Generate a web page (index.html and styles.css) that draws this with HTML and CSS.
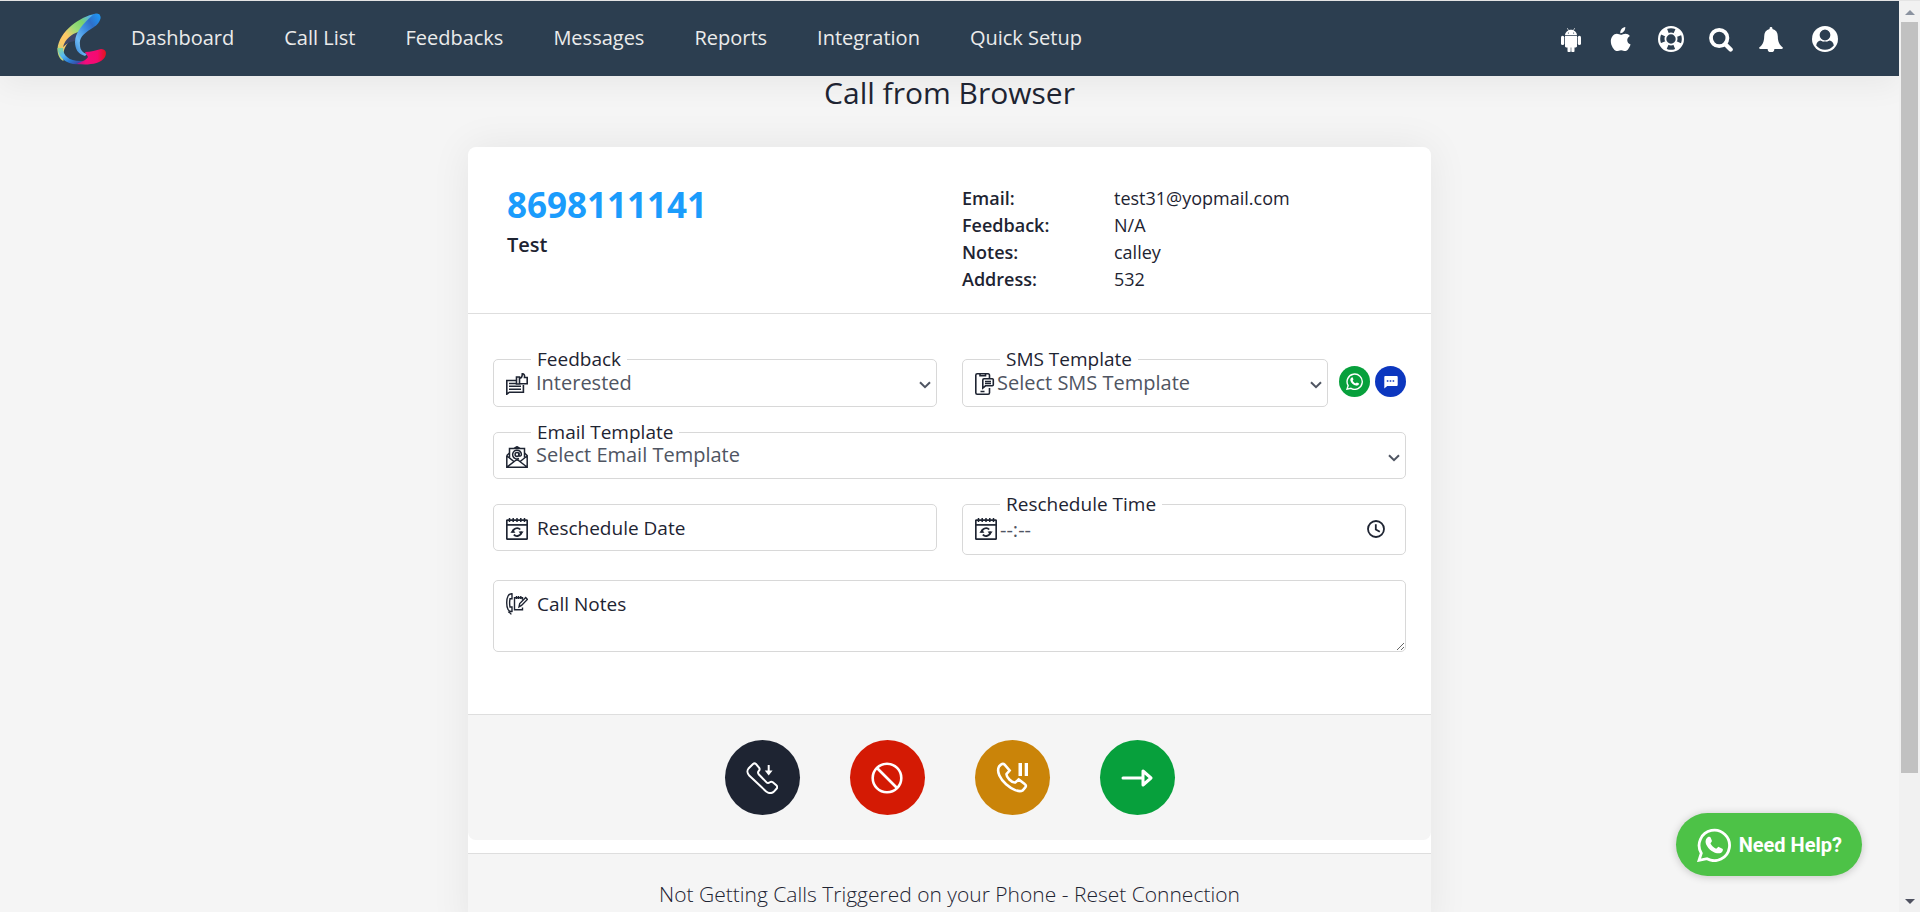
FILE: index.html
```html
<!DOCTYPE html>
<html lang="en">
<head>
<meta charset="utf-8">
<meta name="viewport" content="width=device-width, initial-scale=1">
<title>Call from Browser</title>
<link rel="stylesheet" href="styles.css">
</head>
<body>
<svg class="sprite" aria-hidden="true">
  <symbol id="calendar" viewBox="0 0 22 22">
    <g fill="none" stroke="currentColor" stroke-width="1.7">
      <rect x=".8" y="2.2" width="20.4" height="19" rx=".6"/>
      <path d="M1 6.9h20"/>
      <path d="M3.5 0v4M7.2 0v4M11 0v4M14.8 0v4M18.500 0v4" stroke-width="1.500"/>
      <path d="M6.800 14.500a4.300 4.300 0 0 1 7.400-3M15.200 13.500a4.300 4.300 0 0 1-7.400 3.200" stroke-width="1.800"/>
    </g>
    <path d="M4.400 14.800h5l-2.500-3.600zM12.600 13.400h5l-2.500 3.600z" fill="currentColor"/>
  </symbol>
  <symbol id="chevron" viewBox="0 0 12 8">
    <path d="M1 1.200l5 5 5-5" fill="none" stroke="currentColor" stroke-width="2"/>
  </symbol>
  <symbol id="whatsapp" viewBox="0 0 34 34">
    <path d="M4.300 25.200A15.200 15.200 0 1 1 10 30.700L2 32.300z" fill="none" stroke="currentColor" stroke-width="2.800"/>
    <path d="M11.500 8.800c.9-.3 1.700-.2 2.100.8l1.300 3.100c.3.700-1.500 2.300-1.400 2.800.9 2.200 3.300 4.200 5.600 5.200.7.300 1.900-2.100 2.700-1.800l3.600 1.800c.9.500.5 1.700.1 2.500-1 1.900-3.500 2.500-5.500 2-5.400-1.300-10.100-5.700-11.300-10.300-.600-2.300.700-5.300 2.800-6.100z" fill="currentColor"/>
  </symbol>
</svg>

<div class="shell">
  <div class="page">
    <header class="navbar">
      <a class="logo" href="#" aria-label="Home">
        <svg viewBox="0 0 50 52" width="50" height="52">
          <defs>
            <linearGradient id="lg1" x1="1" y1="0" x2="0" y2="1">
              <stop offset="0" stop-color="#1b96f5"/><stop offset=".15" stop-color="#55b2e8"/><stop offset=".3" stop-color="#7bd36b"/>
              <stop offset=".45" stop-color="#9bdc78"/><stop offset=".62" stop-color="#fcc866"/><stop offset=".75" stop-color="#fcc866"/><stop offset="1" stop-color="#a6dc86"/>
            </linearGradient>
            <linearGradient id="lg2" x1="0" y1="0" x2="1" y2="1">
              <stop offset="0" stop-color="#8bd98a"/><stop offset=".35" stop-color="#55b8f4"/><stop offset=".65" stop-color="#2878d0"/><stop offset="1" stop-color="#4a2a8a"/>
            </linearGradient>
            <linearGradient id="lg3" x1="1" y1="0" x2="0" y2="1">
              <stop offset="0" stop-color="#1b9cfc"/><stop offset=".3" stop-color="#2f6fc8"/><stop offset=".5" stop-color="#3f8fe0"/><stop offset=".75" stop-color="#6fbcf5"/><stop offset="1" stop-color="#2a7ad2"/>
            </linearGradient>
            <linearGradient id="lg4" x1="0" y1="0" x2="1" y2="0">
              <stop offset="0" stop-color="#a01c8c"/><stop offset=".3" stop-color="#f20c7c"/><stop offset=".7" stop-color="#f50a70"/><stop offset="1" stop-color="#e3151b"/>
            </linearGradient>
          </defs>
          <path d="M38 1C24 3 2 18 .5 36c0 6 2 10 6 12-2-12 4-20 14-27C27 14 36 8 43 2c-1-1-3-1.500-5-1z" fill="url(#lg1)"/>
          <path d="M.5 35C1 45 11 53 24 51l2-3C13 49 6 43 6 35z" fill="url(#lg2)"/>
          <path d="M6 34c2-8 9-13 15-15l-2 9c-5 0-9 2-13 6z" fill="#3e4668"/>
          <path d="M37 1c5-1 8 2 6 6-2 5-6 7-9 9-8 5-12 9-11 16 0 5 3 8 7 9l-2 2c-7-2-10-7-10-14 0-9 8-19 19-28z" fill="url(#lg3)"/>
          <path d="M28 39c6 0 11-2 16-3 5 0 6 4 4 8-5 8-19 8-28 7 2-2 9-3 11-7z" fill="url(#lg4)"/>
        </svg>
      </a>
      <nav class="menu" aria-label="Main">
        <a href="#">Dashboard</a><a href="#">Call List</a><a href="#">Feedbacks</a><a href="#">Messages</a><a href="#">Reports</a><a href="#">Integration</a><a href="#">Quick Setup</a>
      </nav>
      <div class="tools">
        <a href="#" aria-label="Android app"><svg viewBox="0 0 26 26"><g fill="currentColor"><path d="M7 9.300c0-2.300 1.500-4 3.300-4.900L9 2.200l.5-.3 1.300 2.300c1.400-.6 3-.6 4.400 0L16.500 1.900l.5.300-1.300 2.200C17.600 5.300 19 7 19 9.300z"/><path d="M7 10h12v10.300c0 .7-.6 1.200-1.200 1.200h-1.300v3.300a1.600 1.600 0 0 1-3.200 0v-3.300h-.6v3.300a1.600 1.600 0 0 1-3.200 0v-3.300H8.200c-.7 0-1.200-.5-1.200-1.200z"/><rect x="3" y="9.700" width="3.200" height="9.300" rx="1.600"/><rect x="19.800" y="9.700" width="3.200" height="9.300" rx="1.600"/></g><circle cx="10.400" cy="7" r=".6" fill="#2c3e50"/><circle cx="15.600" cy="7" r=".6" fill="#2c3e50"/></svg></a>
        <a href="#" aria-label="Apple app"><svg viewBox="0 0 26 26"><path fill="currentColor" d="M22.600 18.500c-.5 1.700-1.300 3.100-2.300 4.500-1 1.400-2 2.100-3.200 2.100-1.500 0-2-.9-4-.9s-2.700.9-4.100.9c-1.200 0-2.300-.8-3.300-2.200C2.700 19.300 1.600 13.400 4.600 10c1.200-1.500 2.700-2.200 4.300-2.200 1.500 0 2.900 1 4 1 1.200 0 2.600-1.100 4.700-1.100 1.500 0 3.200.8 4.300 2.300-3.800 2.200-3.400 7.100.7 8.500zM17.300 1c.2 3.300-2 6.100-5 6.200-.3-3 2-5.800 5-6.200z"/></svg></a>
        <a href="#" aria-label="Support"><svg viewBox="0 0 26 26"><g fill="none" stroke="currentColor"><circle cx="13" cy="13" r="11.900" stroke-width="2.200"/><circle cx="13" cy="13" r="5.600" stroke-width="1.800"/><circle cx="13" cy="13" r="9" stroke-width="6" stroke-dasharray="7 7.140" stroke-dashoffset="-3.570"/></g></svg></a>
        <a href="#" aria-label="Search"><svg viewBox="0 0 26 26"><g fill="none" stroke="currentColor"><circle cx="11.200" cy="12" r="8.200" stroke-width="3.800"/><path d="M17.300 18.200l5.300 5.300" stroke-width="4.400" stroke-linecap="round"/></g></svg></a>
        <a href="#" aria-label="Notifications"><svg viewBox="0 0 26 26"><path fill="currentColor" d="M13 1c1 0 1.600.7 1.400 1.900 3.600.8 5.400 3.600 5.400 7.300 0 5.700 1.800 9 5.200 11.500 0 .7-.6 1.200-1.300 1.200h-7.300a3.400 3.400 0 0 1-6.800 0H2.300c-.7 0-1.300-.5-1.300-1.200 3.400-2.500 5.200-5.800 5.200-11.500 0-3.700 1.800-6.500 5.400-7.300C11.400 1.700 12 1 13 1z"/></svg></a>
        <a class="account" href="#" aria-label="Account"><svg viewBox="0 0 26 26"><circle cx="13" cy="13" r="13" fill="currentColor"/><path fill="#2c3e50" d="M13 14.800c2.300 1.600 3.400 0 4.500-.2 2.200.3 4 2 4.300 5C19.500 22.400 16.500 23.800 13 23.800s-6.500-1.400-8.800-4.200c.3-3 2.100-4.700 4.300-5 1.100.200 2.200 1.800 4.500.2z"/><circle cx="13" cy="9" r="6" fill="#2c3e50" stroke="currentColor" stroke-width="1.200"/></svg></a>
      </div>
    </header>

    <main class="content">
      <h1 class="title">Call from Browser</h1>
      <section class="card">
        <div class="contact">
          <div class="who">
            <h2 class="phone">8698111141</h2>
            <p class="name">Test</p>
          </div>
          <dl class="facts">
            <dt>Email:</dt><dd>test31@yopmail.com</dd>
            <dt>Feedback:</dt><dd>N/A</dd>
            <dt>Notes:</dt><dd>calley</dd>
            <dt>Address:</dt><dd>532</dd>
          </dl>
        </div>

        <form class="form">
          <div class="field">
            <label for="feedback">Feedback</label>
            <svg class="icon" viewBox="0 0 22 22"><g fill="none" stroke="currentColor" stroke-width="1.600"><path d="M11 7.500H.8v13.700l2.600-2h14V12"/><path d="M3 10.500h7M3 13.300h12M3 16.200h12"/><path d="M10.500 4h3v7h-3zM13.500 5.300c2 0 2.800-2 2.800-4.500 2 0 2.500 1.400 2.200 3.700h2.700v6.300h-7.700"/></g></svg>
            <select id="feedback"><option>Interested</option></select>
            <svg class="arrow"><use href="#chevron"/></svg>
          </div>
          <div class="with-buttons">
            <div class="field tight">
              <label for="sms">SMS Template</label>
              <svg class="icon" viewBox="0 0 22 22"><g fill="none" stroke="currentColor" stroke-width="1.600"><path d="M14.500 5V2.200c0-.8-.5-1.400-1.400-1.400H2.200C1.300.8.800 1.400.8 2.200v17.600c0 .8.500 1.400 1.400 1.400h10.900c.9 0 1.400-.6 1.400-1.400V15"/><path d="M5 1v1.800h5.500V1M5.500 18.500h4"/><path d="M9 5.800h8.300c.8 0 1 .3 1 1v5c0 .8-.300 1-1 1H10.500L7.800 15V7c0-.8.400-1.200 1.200-1.200z"/><path d="M10 8.500h6M10 10.500h6"/></g></svg>
              <select id="sms"><option>Select SMS Template</option></select>
              <svg class="arrow"><use href="#chevron"/></svg>
            </div>
            <button class="mini green" type="button" aria-label="Send on WhatsApp"><svg width="17" height="17"><use href="#whatsapp"/></svg></button>
            <button class="mini blue" type="button" aria-label="Send SMS"><svg viewBox="0 0 14 14" width="14" height="14"><path fill="#fff" d="M1.500 1h11c.8 0 1.200.5 1.200 1.200v7.600c0 .8-.5 1.200-1.200 1.200H3.200L.300 13.500V2.200C.3 1.500.700 1 1.500 1z"/><path stroke="#0c37bf" stroke-width="1.600" stroke-dasharray="1.600 1.300" d="M2.800 6h8"/></svg></button>
          </div>
          <div class="field wide short">
            <label for="mail">Email Template</label>
            <svg class="icon" viewBox="0 0 22 22"><g fill="none" stroke="currentColor" stroke-width="1.500"><path d="M.8 9.500v11.800h20.400V9.500L18.500 7M.8 9.500L3.500 7M1 10l7.500 6M21 10l-7.500 6M1 21l8.500-6.500c1-.8 2-.8 3 0L21 21"/><path d="M3.500 11.500V2.500h15v9M8 2.500L11 .7l3 1.800"/><circle cx="11" cy="8.500" r="1.900"/><path d="M13 6.500v2.600c0 1.600 2.400 1.300 2.400-.6A4.400 4.400 0 1 0 13 12.500"/></g></svg>
            <select id="mail"><option>Select Email Template</option></select>
            <svg class="arrow"><use href="#chevron"/></svg>
          </div>
          <div class="field short empty">
            <label for="date">Reschedule Date</label>
            <svg class="icon"><use href="#calendar"/></svg>
            <input id="date" type="text">
          </div>
          <div class="field tall tight">
            <label for="time">Reschedule Time</label>
            <svg class="icon"><use href="#calendar"/></svg>
            <input id="time" type="text" placeholder="--:--">
            <svg class="clock" viewBox="0 0 18 18"><g fill="none" stroke="currentColor" stroke-width="1.800"><circle cx="9" cy="9" r="8"/><path d="M8.800 4.200v5.200l4 2.400"/></g></svg>
          </div>
          <div class="field wide notes empty">
            <label for="notes">Call Notes</label>
            <svg class="icon" viewBox="0 0 22 22"><g fill="none" stroke="currentColor" stroke-width="1.400"><path d="M6 .8C2.500.5.7 4 .7 9.800S2.500 19 6 18.500V14H4c-.5-2.500-.5-5.500 0-8.200h2z"/><path d="M2.500 18.500c0 1.500 2.500.5 2.500 3"/><path d="M16.500 14.500v2.200h-8v-12h8v2M10.500 3v3M12.500 3v3M14.800 3v3"/><path d="M13 13.800l.7-3.200 6-6 1.700 1.800-5.900 6z"/></g></svg>
            <textarea id="notes"></textarea>
          </div>
        </form>

        <div class="actions">
          <button class="round navy" type="button" aria-label="Call"><svg viewBox="0 0 32 32"><g fill="none" stroke="#fff" stroke-width="2"><path d="M2.500 6.500L7 2c1-.8 2-.8 3 0l3 3.600c1 1.300.8 2.200-.1 3.200-1.600 1.600-1 2.500 0 3.700l7.400 7.600c1.300 1.300 2 1.300 3.500.2 1-.8 2-.8 3 0l3.800 3.300c1 1 1 1.900.1 2.900l-3 3.300c-2 1.900-5.500 1.700-7.600-.4L3.200 13.500c-2-2-2.300-5-.7-7z"/><path d="M22.700 3v7"/></g><path fill="#fff" d="M18.800 8.500h7.800L22.700 13.500z"/></svg></button>
          <button class="round red" type="button" aria-label="Do not call"><svg viewBox="0 0 32 32"><g fill="none" stroke="#fff" stroke-width="2.600"><circle cx="16" cy="16" r="14.300"/><path d="M6 6l20 20"/></g></svg></button>
          <button class="round amber" type="button" aria-label="Hold"><svg viewBox="0 0 32 32"><g fill="none" stroke="#fff" stroke-width="2.600"><path d="M3 4.500l2-2c1.400-1 2.500-1 3.600.2l5 5.800-3 3.300c-.8 3.200 5.200 9.200 8.600 8.700l3.500-3 6 4.500c1.400 1 1.600 2.300.4 3.600l-2.300 2.700C19.500 33-2.500 15.500 3 4.500z"/></g><path fill="#fff" d="M22.500 1H26v13h-3.500zM28.700 1h3.300v13h-3.300z"/></svg></button>
          <button class="round go" type="button" aria-label="Next"><svg viewBox="0 0 32 32"><g fill="none" stroke="#fff" stroke-width="3" stroke-linecap="round" stroke-linejoin="round"><path d="M2 16h20M22 9v14l8-7z"/></g></svg></button>
        </div>
        <p class="reset">Not Getting Calls Triggered on your Phone - Reset Connection</p>
      </section>
    </main>
    <a class="help" href="#"><svg width="34" height="34"><use href="#whatsapp"/></svg>Need Help?</a>
  </div>
  <div class="scrollbar" aria-hidden="true"><span class="up"></span><span class="thumb"></span><span class="down"></span></div>
</div>
</body>
</html>
```
FILE: styles.css
```css
* { box-sizing: border-box; }
body { margin: 0; background: #f5f5f5; color: #1e2432; font-family: "Open Sans", sans-serif; }
h1, h2, p, dl, dd { margin: 0; }
a { color: inherit; text-decoration: none; }
.sprite { position: absolute; width: 0; height: 0; }

.shell { display: grid; grid-template-columns: 1fr 21px; height: 100vh; border-top: 1px solid #e4e4e4; overflow: hidden; }
.page { position: relative; display: flex; flex-direction: column; overflow: hidden; }

.navbar { display: flex; align-items: center; flex: none; height: 75px; padding: 0 61px 0 57px; background: #2c3e50; color: #fff; box-shadow: 0 10px 30px rgba(0, 0, 0, .05); }
.logo { display: flex; }
.menu { display: flex; gap: 50px; margin-left: 24px; padding-bottom: 2px; color: #ebebeb; font-size: 20px; font-weight: 500; }
.tools { display: flex; gap: 24px; margin-left: auto; }
.tools a, .tools svg { display: block; width: 26px; height: 26px; }
.account { margin-left: 4px; }

.content { flex: 1; padding: 0 24px; }
.title { font-size: 30px; line-height: 34px; font-weight: 500; text-align: center; }
.card { max-width: 963px; margin: 37px auto 0; background: #fff; border-radius: 8px; box-shadow: 0 0 40px rgba(0, 0, 0, .07); }

.contact { display: grid; grid-template-columns: 1fr 1fr; gap: 25px; padding: 38px 25px 20px; border-bottom: 1px solid #dedede; }
.who { padding-left: 14px; }
.phone { font-size: 35px; line-height: 40px; font-weight: 700; color: #1b9cfc; }
.name { font-size: 20px; line-height: 40px; font-weight: 600; }
.facts { display: grid; grid-template-columns: 152px 1fr; font-size: 18px; line-height: 27px; }
.facts dt { font-weight: 600; }

.form { display: grid; grid-template-columns: 1fr 1fr; align-items: start; gap: 25px; padding: 45px 25px 62px; }
.wide { grid-column: 1 / -1; }
.with-buttons { display: grid; grid-template-columns: 1fr 31px 31px; column-gap: 5px; }
.with-buttons .field { margin-right: 6px; }
.field { position: relative; height: 48px; }
.short { height: 47px; }
.tall { height: 51px; }
.notes { height: 72px; }
.field select, .field input, .field textarea { display: block; width: 100%; height: 100%; padding: 0 30px 2px 42px; border: 1px solid #d8d8d8; border-radius: 5px; background: #fff; color: #4f5562; font: 400 20px "Open Sans", sans-serif; }
.field select { appearance: none; }
.field.tight select { padding-left: 34px; }
.field.tight input { padding: 0 60px 0 37px; }
.field textarea { padding: 10px 44px; }
.field input::placeholder { color: #4f5562; opacity: 1; }
.field label { position: absolute; top: -12px; left: 38px; padding: 0 6px; background: #fff; font-size: 19px; line-height: 24px; font-weight: 500; }
.field.empty label { top: 12px; }
.icon { position: absolute; top: 14px; left: 13px; width: 22px; height: 22px; pointer-events: none; }
.notes .icon { top: 13px; }
.arrow { position: absolute; top: 22px; right: 6px; width: 12px; height: 8px; color: #4f5562; pointer-events: none; }
.clock { position: absolute; top: 16px; right: 21px; width: 18px; height: 18px; pointer-events: none; }

.mini, .round { display: flex; align-items: center; justify-content: center; padding: 0; border: 0; border-radius: 50%; color: #fff; }
.mini { width: 31px; height: 31px; margin-top: 7px; }
.round { width: 75px; height: 75px; }
.round svg { width: 32px; height: 32px; }
.green, .go { background: #07a03c; }
.blue { background: #0c37bf; }
.navy { background: #1e2432; }
.red { background: #d41a04; }
.amber { background: #ca8409; }

.actions { display: flex; justify-content: center; gap: 50px; padding: 25px; border-top: 1px solid #dedede; border-radius: 0 0 8px 8px; background: #f5f5f5; }
.reset { margin-top: 13px; padding: 25px 20px; border-top: 1px solid #dedede; background: #f5f5f5; font-size: 21px; line-height: 30px; font-weight: 300; text-align: center; }

.help { position: absolute; right: 37px; bottom: 36px; display: flex; align-items: center; gap: 8px; height: 63px; padding: 0 20px 0 21px; border-radius: 32px; background: #4dc247; box-shadow: 0 1px 8px rgba(0, 0, 0, .2); color: #fff; font: 700 20px Roboto, sans-serif; }

.scrollbar { display: flex; flex-direction: column; align-items: center; padding: 9px 0 8px; background: #f1f1f1; }
.up, .down { border: 5px solid transparent; border-top: 0; border-bottom: 5px solid #8b93a0; }
.down { margin-top: auto; border-top: 5px solid #4f5260; border-bottom: 0; }
.thumb { width: 17px; height: 84%; margin-top: 7px; margin-right: 1px; background: #c1c1c1; }
```
